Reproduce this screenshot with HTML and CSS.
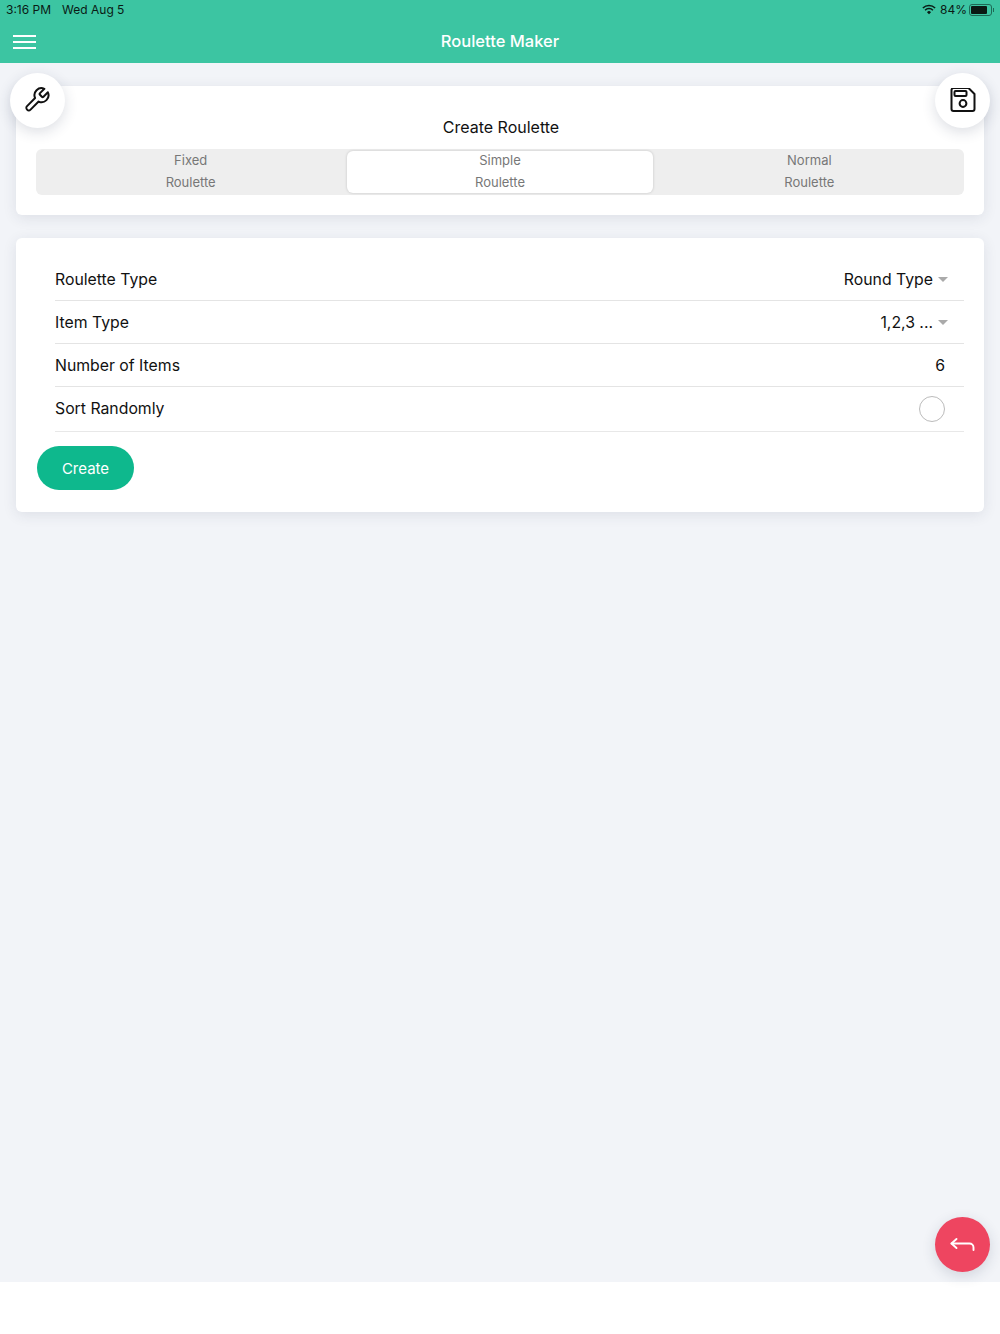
FILE: index.html
```html
<!DOCTYPE html>
<html lang="en">
<head>
  <meta charset="UTF-8">
  <title>Roulette Maker</title>
  <link rel="stylesheet" href="styles.css">
</head>
<body>
  <header class="header">
    <div class="status-bar">
      <div class="status-left">
        <span>3:16 PM</span>
        <span>Wed Aug 5</span>
      </div>
      <div class="status-right">
        <svg class="wifi" viewBox="0 0 16 12" width="14" height="11">
          <path d="M1 4.2a10 10 0 0 1 14 0" fill="none" stroke="#0a1a14" stroke-width="1.7"/>
          <path d="M3.5 6.8a6.4 6.4 0 0 1 9 0" fill="none" stroke="#0a1a14" stroke-width="1.7"/>
          <path d="M8 11.5 5.7 9a3.2 3.2 0 0 1 4.6 0z" fill="#0a1a14"/>
        </svg>
        <span>84%</span>
        <div class="battery"><div class="battery-level"></div></div>
        <div class="battery-tip"></div>
      </div>
    </div>
    <div class="nav-bar">
      <div class="menu-icon"><span></span><span></span><span></span></div>
      <h1 class="nav-title">Roulette Maker</h1>
    </div>
  </header>

  <main class="content">
    <section class="card card-top">
      <h2 class="card-title">Create Roulette</h2>
      <div class="segment">
        <div class="segment-item"><span>Fixed<br>Roulette</span></div>
        <div class="segment-item active"><span>Simple<br>Roulette</span></div>
        <div class="segment-item"><span>Normal<br>Roulette</span></div>
      </div>
    </section>

    <section class="card card-form">
      <div class="row row-first">
        <span>Roulette Type</span>
        <span class="row-value">Round Type<i class="caret"></i></span>
      </div>
      <div class="row">
        <span>Item Type</span>
        <span class="row-value">1,2,3 ...<i class="caret"></i></span>
      </div>
      <div class="row">
        <span>Number of Items</span>
        <span class="row-value plain">6</span>
      </div>
      <div class="row row-last">
        <span>Sort Randomly</span>
        <span class="radio"></span>
      </div>
      <button class="create-btn">Create</button>
    </section>

    <button class="fab fab-left" aria-label="Settings">
      <svg viewBox="1 1 24 24" width="28" height="28" fill="none" stroke="#111" stroke-width="1.7" stroke-linejoin="round" stroke-linecap="round">
        <path d="M14.7 6.3a1 1 0 0 0 0 1.4l1.6 1.6a1 1 0 0 0 1.4 0l3.77-3.77a6 6 0 0 1-7.94 7.94l-6.91 6.91a2.12 2.12 0 0 1-3-3l6.91-6.91a6 6 0 0 1 7.94-7.94l-3.76 3.76z"/>
      </svg>
    </button>
    <button class="fab fab-right" aria-label="Save">
      <svg viewBox="0 1.5 26 26" width="26" height="26" fill="none" stroke="#111" stroke-width="2" stroke-linejoin="round">
        <path d="M3.5 1.5h15l6 6v15a2 2 0 0 1-2 2h-19a2 2 0 0 1-2-2v-19a2 2 0 0 1 2-2z"/>
        <rect x="4.5" y="4.5" width="12" height="5" rx="1"/>
        <circle cx="13" cy="17" r="3.4"/>
      </svg>
    </button>
    <button class="fab fab-back" aria-label="Back">
      <svg viewBox="0 0 26 16" width="26" height="16" fill="none" stroke="#fff" stroke-width="1.9" stroke-linecap="round" stroke-linejoin="round">
        <path d="M6.5 2 1.5 6.5l5 4.5"/>
        <path d="M1.5 6.5h18a4 4 0 0 1 4 4V13"/>
      </svg>
    </button>
  </main>
</body>
</html>
```

FILE: styles.css
```css
* {
  box-sizing: border-box;
}

body {
  margin: 0;
  height: 1334px;
  background: white;
  font-family: Inter, 'Noto Sans', sans-serif;
  color: #111;
}

.header {
  height: 63px;
  background: #3cc5a2;
}

.status-bar {
  height: 19px;
  display: flex;
  justify-content: space-between;
  align-items: center;
  padding: 0 6px 0 6px;
  font-size: 12px;
  color: #0a1a14;
}

.status-left {
  display: flex;
  gap: 11px;
}

.status-right {
  display: flex;
  align-items: center;
  gap: 4px;
}

.battery {
  width: 23px;
  height: 12px;
  margin-left: -2px;
  border: 1px solid #1e6a56;
  border-radius: 3px;
  padding: 1px;
}

.battery-level {
  width: 84%;
  height: 100%;
  background: #0a1a14;
  border-radius: 1px;
}

.battery-tip {
  width: 1px;
  height: 4px;
  margin-left: -3px;
  background: #1e6a56;
}

.nav-bar {
  height: 44px;
  position: relative;
  display: flex;
  align-items: center;
  justify-content: center;
}

.nav-title {
  margin: 0;
  font-size: 16.5px;
  font-weight: 500;
  color: white;
}

.menu-icon {
  position: absolute;
  left: 13px;
  top: 16px;
  width: 23px;
  display: flex;
  flex-direction: column;
  gap: 4px;
}

.menu-icon span {
  height: 2px;
  background: white;
}

.content {
  position: relative;
  height: 1219px;
  background: #f2f4f8;
  padding: 23px 16px 0;
}

.card {
  background: white;
  border-radius: 6px;
  box-shadow: 0 3px 14px rgba(40, 50, 80, 0.1);
}

.card-top {
  height: 129px;
  padding: 32px 20px 0;
}

.card-title {
  margin: 0 0 12px;
  height: 19px;
  padding-left: 2px;
  line-height: 19px;
  font-size: 16px;
  font-weight: 400;
  text-align: center;
}

.segment {
  height: 46px;
  display: grid;
  grid-template-columns: 1fr 1fr 1fr;
  padding: 2px 0;
  background: #eeeeee;
  border-radius: 6px;
}

.segment-item {
  font-size: 13px;
  line-height: 22px;
  text-align: center;
  color: #777;
  border-radius: 6px;
}

.segment-item span {
  display: block;
  margin-top: -2px;
}

.segment-item.active {
  margin: 0 1.5px;
  background: white;
  box-shadow: 0 0 3px rgba(0, 0, 0, 0.18);
}

.card-form {
  height: 274px;
  margin-top: 23px;
  padding: 19px 20px 0 21px;
}

.row {
  height: 43px;
  margin-left: 18px;
  display: flex;
  justify-content: space-between;
  align-items: center;
  font-size: 15.8px;
  border-bottom: 1px solid #e4e4e4;
  padding-right: 19px;
}

.row-first {
  height: 44px;
  padding-top: 1px;
}

.row-last {
  height: 45px;
  padding-bottom: 1px;
  border-bottom-color: #e8e8e8;
}

.row-value {
  display: flex;
  align-items: center;
}

.caret {
  width: 0;
  height: 0;
  margin: 0 -3px 0 5px;
  border-left: 5px solid transparent;
  border-right: 5px solid transparent;
  border-top: 5px solid #aaa;
}

.radio {
  width: 26px;
  height: 26px;
  border: 1px solid #bbb;
  border-radius: 50%;
}

.create-btn {
  display: block;
  width: 97px;
  height: 44px;
  margin: 14px 0 0 0;
  border: none;
  border-radius: 22px;
  background: #0eb88d;
  color: white;
  font-family: inherit;
  font-size: 15px;
}

.fab {
  position: absolute;
  width: 55px;
  height: 55px;
  display: flex;
  align-items: center;
  justify-content: center;
  padding: 0;
  border: none;
  border-radius: 50%;
  background: white;
  box-shadow: 0 4px 14px rgba(40, 50, 80, 0.16);
}

.fab-left {
  left: 10px;
  top: 10px;
}

.fab-right {
  right: 10px;
  top: 10px;
}

.fab-back {
  right: 10px;
  bottom: 10px;
  background: #ee4560;
}
```
